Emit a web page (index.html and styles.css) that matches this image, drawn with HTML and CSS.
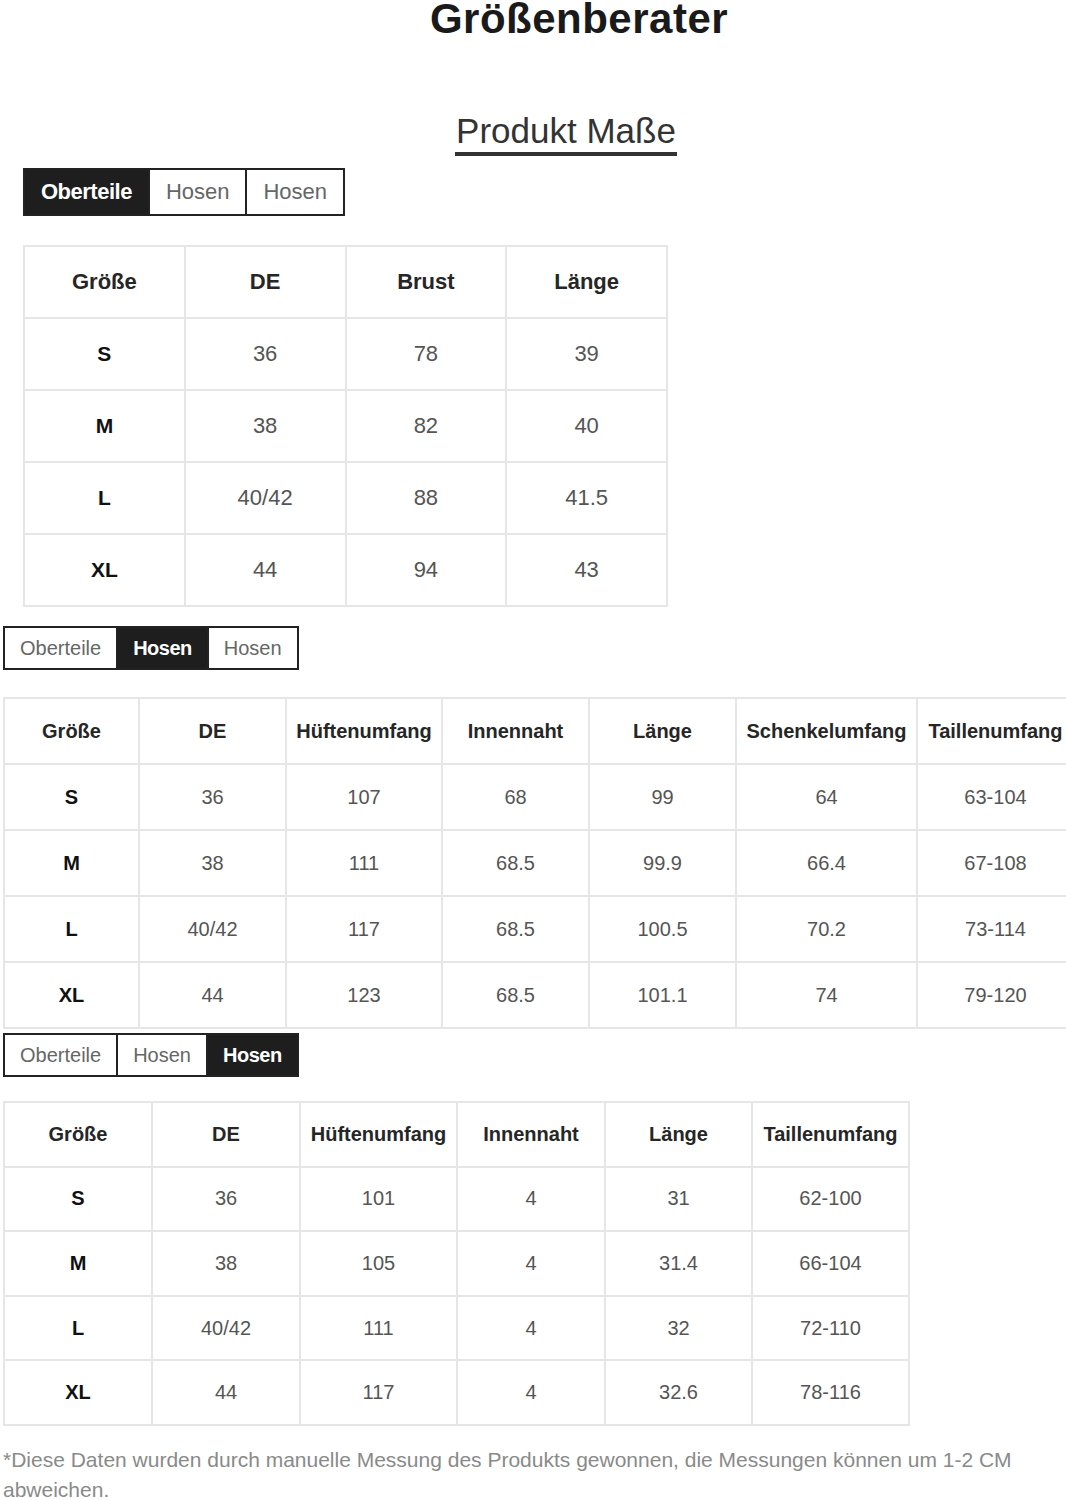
FILE: index.html
```html
<!DOCTYPE html>
<html lang="de">
<head>
<meta charset="utf-8">
<title>Größenberater</title>
<link rel="stylesheet" href="styles.css">
</head>
<body>
<h1 class="title">Größenberater</h1>
<div class="subtitle-wrap"><h2 class="subtitle">Produkt Maße</h2></div>

<section class="block block-first">
  <div class="tabs tabs-large">
    <span class="tab active">Oberteile</span>
    <span class="tab">Hosen</span>
    <span class="tab">Hosen</span>
  </div>
  <table class="chart chart-top">
    <colgroup><col class="c1"><col class="c1"><col class="c1"><col class="c1"></colgroup>
    <tr><th>Größe</th><th>DE</th><th>Brust</th><th>Länge</th></tr>
    <tr><td class="size">S</td><td>36</td><td>78</td><td>39</td></tr>
    <tr><td class="size">M</td><td>38</td><td>82</td><td>40</td></tr>
    <tr><td class="size">L</td><td>40/42</td><td>88</td><td>41.5</td></tr>
    <tr><td class="size">XL</td><td>44</td><td>94</td><td>43</td></tr>
  </table>
</section>

<section class="block block-second">
  <div class="tabs tabs-small">
    <span class="tab">Oberteile</span>
    <span class="tab active">Hosen</span>
    <span class="tab">Hosen</span>
  </div>
  <div class="table-clip">
    <table class="chart chart-pants">
      <colgroup>
        <col class="p1"><col class="p2"><col class="p3"><col class="p4"><col class="p5"><col class="p6"><col class="p7">
      </colgroup>
      <tr><th>Größe</th><th>DE</th><th>Hüftenumfang</th><th>Innennaht</th><th>Länge</th><th>Schenkelumfang</th><th>Taillenumfang</th></tr>
      <tr><td class="size">S</td><td>36</td><td>107</td><td>68</td><td>99</td><td>64</td><td>63-104</td></tr>
      <tr><td class="size">M</td><td>38</td><td>111</td><td>68.5</td><td>99.9</td><td>66.4</td><td>67-108</td></tr>
      <tr><td class="size">L</td><td>40/42</td><td>117</td><td>68.5</td><td>100.5</td><td>70.2</td><td>73-114</td></tr>
      <tr><td class="size">XL</td><td>44</td><td>123</td><td>68.5</td><td>101.1</td><td>74</td><td>79-120</td></tr>
    </table>
  </div>
</section>

<section class="block block-third">
  <div class="tabs tabs-small">
    <span class="tab">Oberteile</span>
    <span class="tab">Hosen</span>
    <span class="tab active">Hosen</span>
  </div>
  <table class="chart chart-shorts">
    <colgroup>
      <col class="s1"><col class="s2"><col class="s3"><col class="s4"><col class="s5"><col class="s6">
    </colgroup>
    <tr><th>Größe</th><th>DE</th><th>Hüftenumfang</th><th>Innennaht</th><th>Länge</th><th>Taillenumfang</th></tr>
    <tr><td class="size">S</td><td>36</td><td>101</td><td>4</td><td>31</td><td>62-100</td></tr>
    <tr><td class="size">M</td><td>38</td><td>105</td><td>4</td><td>31.4</td><td>66-104</td></tr>
    <tr><td class="size">L</td><td>40/42</td><td>111</td><td>4</td><td>32</td><td>72-110</td></tr>
    <tr><td class="size">XL</td><td>44</td><td>117</td><td>4</td><td>32.6</td><td>78-116</td></tr>
  </table>
</section>

<p class="note">*Diese Daten wurden durch manuelle Messung des Produkts gewonnen, die Messungen können um 1-2 CM abweichen.</p>
</body>
</html>
```

FILE: styles.css
```css
html, body {
  margin: 0;
  padding: 0;
  background: #ffffff;
}

body {
  font-family: "Liberation Sans", Arial, sans-serif;
  color: #222;
  width: 1066px;
  overflow: hidden;
}

.title {
  margin: 0;
  padding-left: 92px;
  text-align: center;
  font-size: 42px;
  line-height: 38px;
  font-weight: bold;
  letter-spacing: 0.5px;
  color: #1a1a1a;
}

.subtitle-wrap {
  margin-top: 75px;
  padding-left: 66px;
  text-align: center;
}

.subtitle {
  display: inline-block;
  margin: 0;
  font-size: 35px;
  line-height: 35px;
  font-weight: normal;
  color: #333;
  padding: 0 1px 4px;
  border-bottom: 4px solid #333;
}

.block-first {
  margin-top: 12px;
  padding-left: 23px;
}

.block-second {
  margin-top: 19px;
  padding-left: 3px;
}

.block-third {
  margin-top: 4px;
  padding-left: 3px;
}

.tabs {
  display: flex;
  align-items: stretch;
}

.tab {
  display: flex;
  align-items: center;
  border: 2px solid #222;
  color: #666;
  background: #fff;
}

.tab + .tab {
  border-left: 0;
}

.tab.active {
  background: #1e1e1e;
  color: #fff;
  font-weight: bold;
  letter-spacing: -0.5px;
}

.tabs-large .tab {
  height: 44px;
  padding: 0 16px;
  font-size: 22px;
}

.tabs-small .tab {
  height: 40px;
  padding: 0 15px;
  font-size: 20px;
}

.chart {
  border-collapse: collapse;
  table-layout: fixed;
}

.chart th,
.chart td {
  border: 2px solid #e6e6e6;
  text-align: center;
  vertical-align: middle;
  padding: 0;
}

.chart th {
  font-weight: bold;
  color: #262626;
}

.chart td {
  color: #555;
}

.chart td.size {
  font-weight: bold;
  color: #111;
}

/* Oberteile */
.chart-top {
  margin-top: 29px;
  width: 643px;
}

.chart-top col.c1 {
  width: 160.75px;
}

.chart-top th,
.chart-top td {
  height: 70px;
  font-size: 22px;
}

.chart-top td.size {
  font-size: 21px;
}

/* Hosen */
.table-clip {
  margin-top: 27px;
  overflow: hidden;
}

.chart-pants {
  width: 1070px;
}

.chart-pants col.p1 { width: 135px; }
.chart-pants col.p2 { width: 147px; }
.chart-pants col.p3 { width: 156px; }
.chart-pants col.p4 { width: 147px; }
.chart-pants col.p5 { width: 147px; }
.chart-pants col.p6 { width: 181px; }
.chart-pants col.p7 { width: 157px; }

.chart-pants th,
.chart-pants td {
  height: 64px;
  font-size: 20px;
}

/* Shorts */
.chart-shorts {
  margin-top: 24px;
  width: 905px;
}

.chart-shorts col.s1 { width: 148px; }
.chart-shorts col.s2 { width: 148px; }
.chart-shorts col.s3 { width: 157px; }
.chart-shorts col.s4 { width: 148px; }
.chart-shorts col.s5 { width: 147px; }
.chart-shorts col.s6 { width: 157px; }

.chart-shorts th,
.chart-shorts td {
  height: 62.6px;
  font-size: 20px;
}

.note {
  margin: 19px 0 0;
  padding-left: 3px;
  font-size: 21px;
  line-height: 30px;
  color: #8a8a8a;
}
```
